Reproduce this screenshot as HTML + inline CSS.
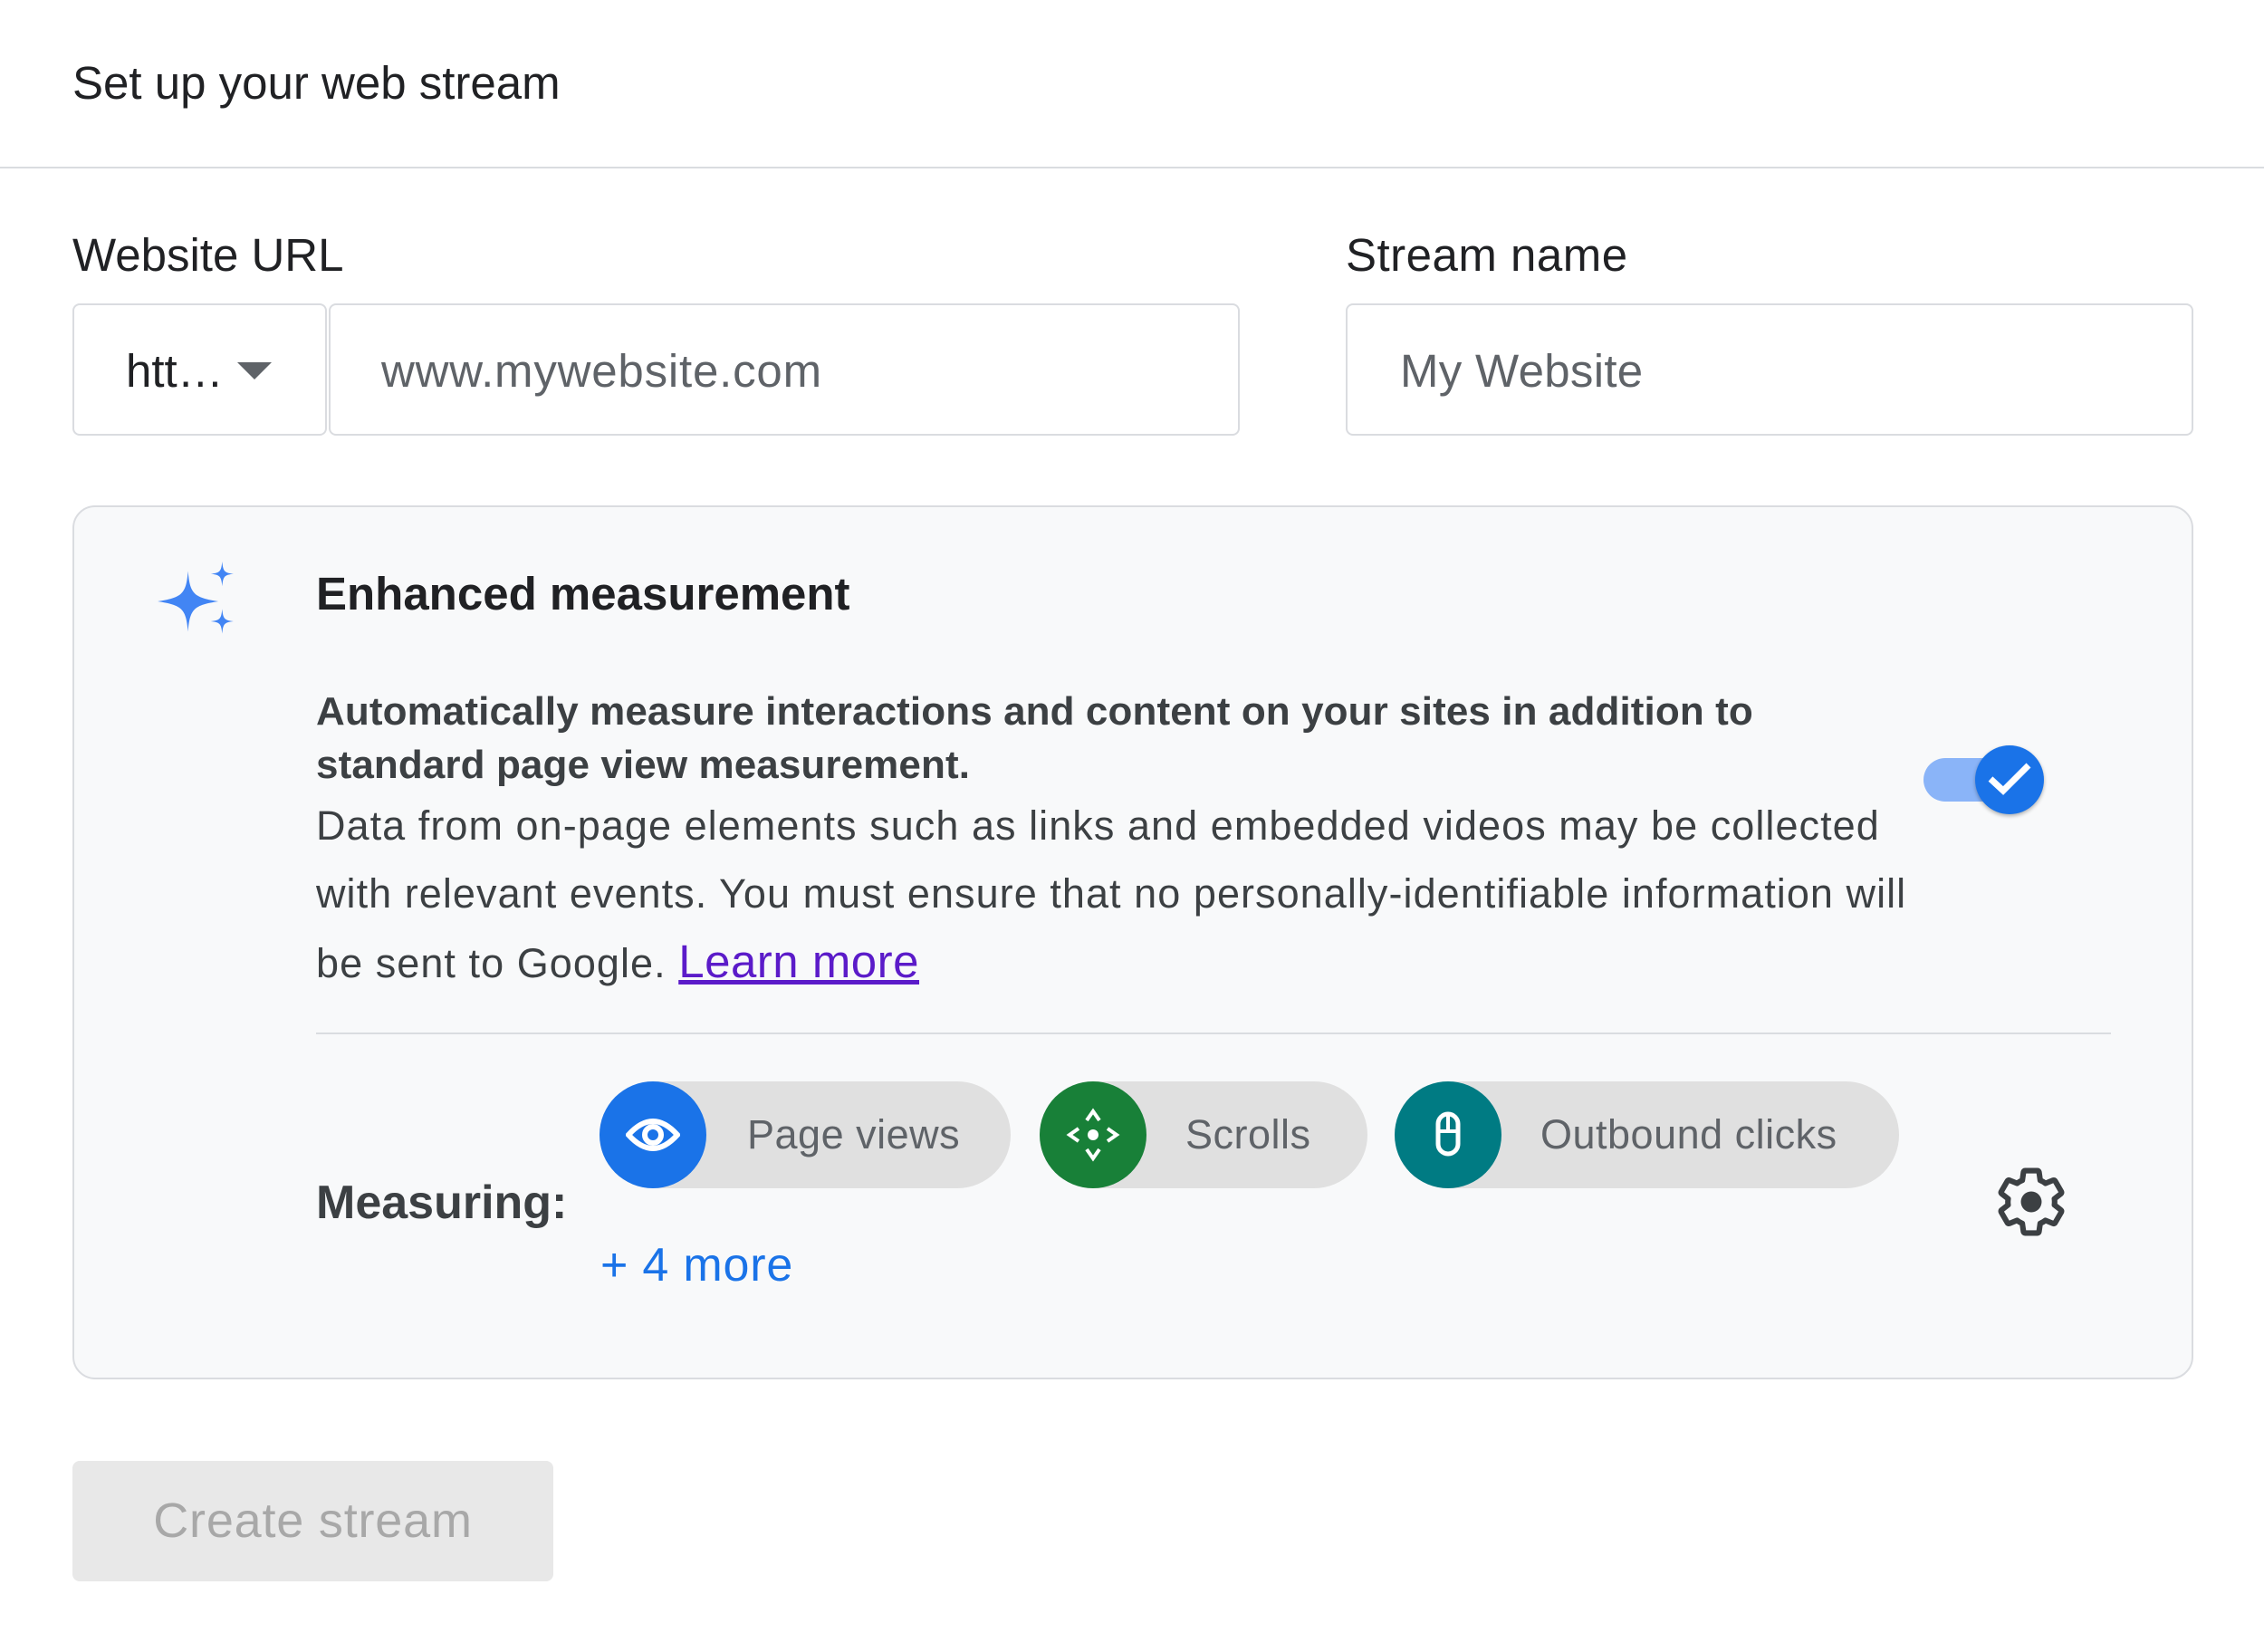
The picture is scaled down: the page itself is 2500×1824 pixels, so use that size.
<!DOCTYPE html>
<html><head><meta charset="utf-8"><style>
*{margin:0;padding:0;box-sizing:border-box}
body{width:2500px;height:1824px;background:#fff;font-family:"Liberation Sans",Arial,sans-serif;position:relative;overflow:hidden;color:#202124}
.a{position:absolute;white-space:nowrap}
.box{position:absolute;border:2px solid #dadce0;border-radius:8px;background:#fff}
.chip{position:absolute;top:1194px;height:118px;background:#e0e0e0;border-radius:59px}
.chip .c{position:absolute;left:0;top:0;width:118px;height:118px;border-radius:50%}
.chip .t{position:absolute;left:163px;top:0;line-height:118px;font-size:45px;color:#5f6368;letter-spacing:0.5px}
.chip svg{position:absolute;left:29px;top:29px}
</style></head><body>
<div class="a" style="left:80px;top:62px;font-size:51px;color:#202124">Set up your web stream</div>
<div class="a" style="left:0;top:184px;width:2500px;height:2px;background:#dadce0"></div>

<div class="a" style="left:80px;top:252px;font-size:51px">Website URL</div>
<div class="a" style="left:1486px;top:252px;font-size:51px;letter-spacing:0.5px">Stream name</div>

<div class="box" style="left:80px;top:335px;width:281px;height:146px"></div>
<div class="a" style="left:139px;top:380px;font-size:51px;color:#202124">htt…</div>
<svg class="a" style="left:262px;top:400px" width="40" height="20"><path d="M0 0H38L19 19Z" fill="#5f6368"/></svg>
<div class="box" style="left:363px;top:335px;width:1006px;height:146px"></div>
<div class="a" style="left:421px;top:380px;font-size:51px;color:#5f6368;letter-spacing:0.8px">www.mywebsite.com</div>
<div class="box" style="left:1486px;top:335px;width:936px;height:146px"></div>
<div class="a" style="left:1546px;top:380px;font-size:51px;color:#5f6368;letter-spacing:0.3px">My Website</div>

<div class="a" style="left:80px;top:558px;width:2342px;height:965px;background:#f8f9fa;border:2px solid #dadce0;border-radius:25px"></div>
<svg class="a" style="left:172px;top:620px" width="88" height="88" viewBox="0 0 84 84">
<path d="M34 10 C36 34 40 38 66 42 C40 46 36 50 34 74 C32 50 28 46 2 42 C28 38 32 34 34 10Z" fill="#4285f4"/>
<path d="M70 0 C71 10 72 12 82 13 C72 14 71 16 70 26 C69 16 68 14 58 13 C68 12 69 10 70 0Z" fill="#4285f4"/>
<path d="M70 50 C71 60 72 62 82 63 C72 64 71 66 70 76 C69 66 68 64 58 63 C68 62 69 60 70 50Z" fill="#4285f4"/>
</svg>
<div class="a" style="left:349px;top:626px;font-size:51px;font-weight:bold;color:#202124;letter-spacing:0">Enhanced measurement</div>
<div class="a" style="left:349px;top:756px;font-size:44px;font-weight:bold;color:#3c4043;line-height:59px;letter-spacing:0.1px">Automatically measure interactions and content on your sites in addition to<br>standard page view measurement.</div>
<div class="a" style="left:349px;top:874px;font-size:45px;color:#3c4043;line-height:75px;letter-spacing:1.05px">Data from on-page elements such as links and embedded videos may be collected<br>with relevant events. You must ensure that no personally-identifiable information will<br>be sent to Google. <span style="font-size:51px;color:#5b1bc9;text-decoration:underline;letter-spacing:0.5px">Learn more</span></div>

<div class="a" style="left:2124px;top:837px;width:108px;height:48px;border-radius:24px;background:#8ab4f8"></div>
<div class="a" style="left:2181px;top:823px;width:76px;height:76px;border-radius:50%;background:#1a73e8;box-shadow:0 2px 4px rgba(0,0,0,.3)"></div>
<svg class="a" style="left:2194px;top:840px" width="50" height="40"><path d="M4 20 L18 33 L46 5" stroke="#fff" stroke-width="7" fill="none"/></svg>

<div class="a" style="left:349px;top:1140px;width:1982px;height:2px;background:#dadce0"></div>
<div class="a" style="left:349px;top:1298px;font-size:52px;font-weight:bold;color:#3c4043">Measuring:</div>

<div class="chip" style="left:662px;width:454px"><div class="c" style="background:#1a73e8"></div>
<svg width="60" height="60" viewBox="0 0 60 60"><path d="M3 30 Q30 0 57 30 Q30 60 3 30Z" fill="none" stroke="#fff" stroke-width="6"/><circle cx="30" cy="30" r="9" fill="none" stroke="#fff" stroke-width="6"/></svg>
<div class="t">Page views</div></div>
<div class="chip" style="left:1148px;width:362px"><div class="c" style="background:#188038"></div>
<svg width="60" height="60" viewBox="0 0 60 60" fill="none" stroke="#fff" stroke-width="4"><path d="M23 14 L30 4 L37 14 M23 46 L30 56 L37 46 M14 23 L4 30 L14 37 M46 23 L56 30 L46 37"/><circle cx="30" cy="30" r="6" fill="#fff" stroke="none"/></svg>
<div class="t" style="left:161px">Scrolls</div></div>
<div class="chip" style="left:1540px;width:557px"><div class="c" style="background:#007b83"></div>
<svg width="60" height="60" viewBox="0 0 60 60"><rect x="19" y="7" width="22" height="44" rx="11" fill="none" stroke="#fff" stroke-width="5"/><path d="M19 26 H41 M30 7 V26" stroke="#fff" stroke-width="4"/></svg>
<div class="t" style="left:161px">Outbound clicks</div></div>

<svg class="a" style="left:2200px;top:1284px" width="86" height="86" viewBox="0 0 24 24"><path fill="none" stroke="#3c4043" stroke-width="1.7" stroke-linejoin="round" d="M19.14 12.94c.04-.3.06-.61.06-.94 0-.32-.02-.64-.07-.94l2.03-1.58a.49.49 0 0 0 .12-.61l-1.92-3.32a.488.488 0 0 0-.59-.22l-2.39.96c-.5-.38-1.03-.7-1.62-.94l-.36-2.54a.484.484 0 0 0-.48-.41h-3.84c-.24 0-.43.17-.47.41l-.36 2.54c-.59.24-1.13.57-1.62.94l-2.39-.96c-.22-.08-.47 0-.59.22L2.74 8.87c-.12.21-.08.47.12.61l2.03 1.58c-.05.3-.09.63-.09.94s.02.64.07.94l-2.03 1.58a.49.49 0 0 0-.12.61l1.92 3.32c.12.22.37.29.59.22l2.39-.96c.5.38 1.03.7 1.62.94l.36 2.54c.05.24.24.41.48.41h3.84c.24 0 .44-.17.47-.41l.36-2.54c.59-.24 1.13-.56 1.62-.94l2.39.96c.22.08.47 0 .59-.22l1.92-3.32c.12-.22.07-.47-.12-.61l-2.01-1.58z"/><circle cx="12" cy="12" r="3.2" fill="#3c4043"/></svg>

<div class="a" style="left:663px;top:1367px;font-size:52px;color:#1a73e8;letter-spacing:0.8px">+ 4 more</div>

<div class="a" style="left:80px;top:1613px;width:531px;height:133px;background:#e8e8e8;border-radius:8px"></div>
<div class="a" style="left:80px;top:1613px;width:531px;height:133px;line-height:133px;text-align:center;font-size:54px;color:#a8a8a8;letter-spacing:0.8px">Create stream</div>
</body></html>
